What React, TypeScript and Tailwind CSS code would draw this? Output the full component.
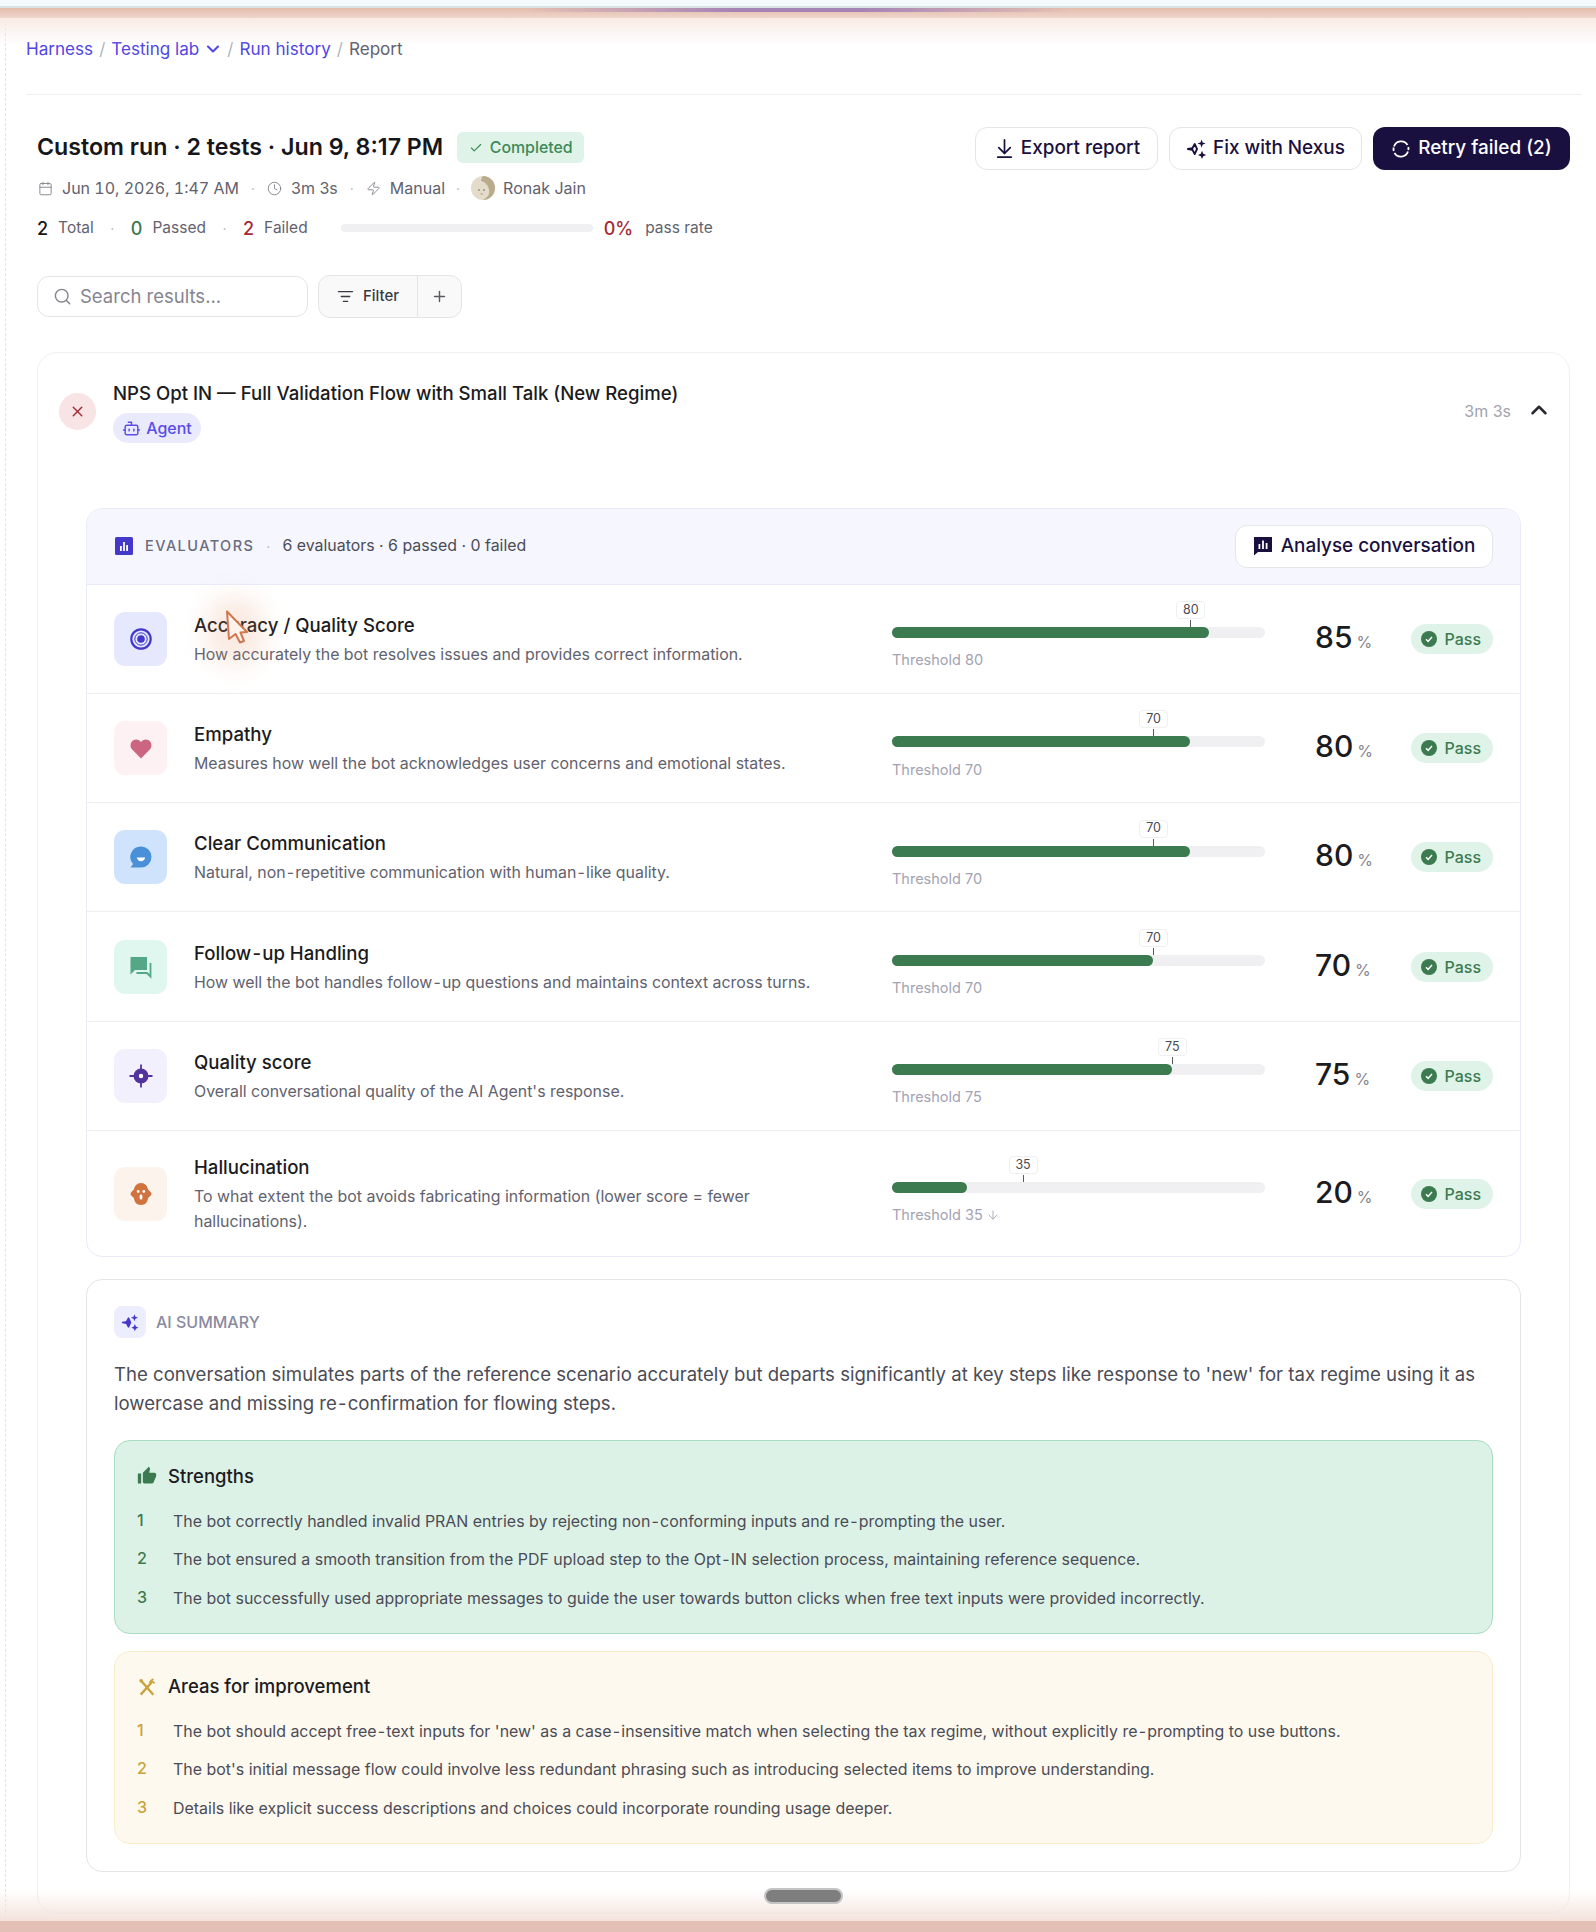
import { ArrowDown, ArrowDownToLine, Bot, Calendar, Check, ChevronDown, ChevronUp, Clock, ListFilter, Plus, Search, X, Zap } from "lucide-react";
import { Fragment } from "react";
import type { ReactNode } from "react";

interface Evaluator {
  name: string;
  desc: string;
  threshold: number;
  score: number;
  iconBg: string;
  icon: ReactNode;
  note?: boolean;
}

const hy = (t: string) =>
  t.split("-").map((part, i) => (
    <Fragment key={i}>
      {i > 0 && <span className="mx-[1.2px]">-</span>}
      {part}
    </Fragment>
  ));

const Sparkles = ({ className, filled }: { className: string; filled?: boolean }) => (
  <svg viewBox="0 0 24 24" className={className} fill="currentColor">
    <path
      d="M9.5 6.5 12 12l-2.5 5.5L7 12.8 2 12l5-.8z"
      fill={filled ? "currentColor" : "none"}
      stroke="currentColor"
      strokeWidth="2"
      strokeLinejoin="round"
    />
    <path d="M17 1.5l1.2 3.3 3.3 1.2-3.3 1.2L17 10.5l-1.2-3.3L12.5 6l3.3-1.2z" />
    <path d="M17.5 14l1.3 3.2 3.2 1.3-3.2 1.3-1.3 3.2-1.3-3.2-3.2-1.3 3.2-1.3z" />
  </svg>
);

const evaluators: Evaluator[] = [
  {
    name: "Accuracy / Quality Score",
    desc: "How accurately the bot resolves issues and provides correct information.",
    threshold: 80,
    score: 85,
    iconBg: "bg-[#e6e8fd]",
    icon: (
      <svg viewBox="0 0 24 24" className="w-[24px] h-[24px]">
        <circle cx="12" cy="12" r="9.7" fill="none" stroke="#4338ca" strokeWidth="2.2" />
        <circle cx="12" cy="12" r="3.8" fill="#4338ca" />
        <circle cx="12" cy="12" r="6.2" fill="none" stroke="#4338ca" strokeWidth="1" />
      </svg>
    ),
  },
  {
    name: "Empathy",
    desc: "Measures how well the bot acknowledges user concerns and emotional states.",
    threshold: 70,
    score: 80,
    iconBg: "bg-[#fdf1f3]",
    icon: (
      <svg viewBox="0 0 24 24" className="w-[24px] h-[24px]">
        <path d="M12 22.5 3.2 13.6C.6 10.8 1 6.2 4.4 4.2 7 2.7 10.2 3.3 12 6c1.8-2.7 5-3.3 7.6-1.8 3.4 2 3.8 6.6 1.2 9.4z" fill="#cc6680" />
      </svg>
    ),
  },
  {
    name: "Clear Communication",
    desc: "Natural, non-repetitive communication with human-like quality.",
    threshold: 70,
    score: 80,
    iconBg: "bg-[#cfe4fc]",
    icon: (
      <svg viewBox="0 0 24 24" className="w-[24px] h-[24px]">
        <path d="M12 1.5a10.5 10.5 0 0 1 0 21H1.5l2.6-3.4A10.5 10.5 0 0 1 12 1.5z" fill="#4a90d9" />
        <path d="M7.8 12.5h8.4c-.4 2.4-2.1 3.8-4.2 3.8s-3.800-1.400-4.200-3.800z" fill="#fff" />
      </svg>
    ),
  },
  {
    name: "Follow-up Handling",
    desc: "How well the bot handles follow-up questions and maintains context across turns.",
    threshold: 70,
    score: 70,
    iconBg: "bg-[#dff7ef]",
    icon: (
      <svg viewBox="0 0 24 24" className="w-[24px] h-[24px]">
        <path d="M1.500 2h16.500v13H6l-4.500 4.500z" fill="#54a886" />
        <path d="M21.500 8v13.500L18 18H7.500" fill="none" stroke="#54a886" strokeWidth="1.800" />
      </svg>
    ),
  },
  {
    name: "Quality score",
    desc: "Overall conversational quality of the AI Agent's response.",
    threshold: 75,
    score: 75,
    iconBg: "bg-[#f3f0fe]",
    icon: (
      <svg viewBox="0 0 24 24" className="w-[24px] h-[24px]">
        <circle cx="12" cy="12" r="7.500" fill="#53349a" />
        <path d="M12 .5v23M.5 12h23" stroke="#53349a" strokeWidth="1.800" />
        <circle cx="12" cy="12" r="2.200" fill="#fff" />
      </svg>
    ),
  },
  {
    name: "Hallucination",
    desc: "To what extent the bot avoids fabricating information (lower score = fewer hallucinations).",
    threshold: 35,
    score: 20,
    iconBg: "bg-[#fcf3ec]",
    note: true,
    icon: (
      <svg viewBox="0 0 24 24" className="w-[24px] h-[24px]">
        <path d="M12 1c4.200 0 6.500 3.200 7 6.500 2.200 1.500 3.500 3.500 3.500 4.500s-1.500 2.500-3.300 3.800c-.5 2.800-1.700 7.200-7.200 7.200s-6.700-4.400-7.200-7.200C3 14.500 1.500 13 1.500 12s1.300-3 3.500-4.500C5.500 4.200 7.800 1 12 1z" fill="#d0733f" />
        <circle cx="9.200" cy="9.500" r="1.400" fill="#fff" />
        <circle cx="14.800" cy="9.500" r="1.400" fill="#fff" />
        <ellipse cx="12" cy="15" rx="1.500" ry="2.800" fill="#fff" />
      </svg>
    ),
  },
];

const strengths = [
  "The bot correctly handled invalid PRAN entries by rejecting non-conforming inputs and re-prompting the user.",
  "The bot ensured a smooth transition from the PDF upload step to the Opt-IN selection process, maintaining reference sequence.",
  "The bot successfully used appropriate messages to guide the user towards button clicks when free text inputs were provided incorrectly.",
];

const improvements = [
  "The bot should accept free-text inputs for 'new' as a case-insensitive match when selecting the tax regime, without explicitly re-prompting to use buttons.",
  "The bot's initial message flow could involve less redundant phrasing such as introducing selected items to improve understanding.",
  "Details like explicit success descriptions and choices could incorporate rounding usage deeper.",
];

const Dot = ({ className }: { className: string }) => <span className={`text-[#b5b5bd] text-[14px] ${className}`}>·</span>;

const EvaluatorRow = ({ e, last }: { e: Evaluator; last: boolean }) => (
  <div className={`flex items-center pl-[27px] pr-[26px] ${last ? "h-[125.500px]" : "h-[109.300px] border-b border-[#eeeef1]"}`}>
    <div className={`w-[53px] h-[54px] shrink-0 rounded-[11px] flex items-center justify-center ${e.iconBg}`}>{e.icon}</div>
    <div className="w-[725px] shrink-0 pl-[27px] pr-[50px] pt-[2px]">
      <div className="text-[18.600px] leading-[24px] font-medium text-[#1b1b20]">{hy(e.name)}</div>
      <div className="mt-[5px] text-[15.900px] leading-[25px] text-[#62626e]">{hy(e.desc)}</div>
    </div>
    <div className="w-[373px] shrink-0 pt-[20px]">
      <div className="relative h-[11px] rounded-full bg-[#f0f0f2]">
        <div className="h-full rounded-full bg-[#3c7a4f]" style={{ width: `${e.score}%` }} />
        <div className="absolute top-[-7px] h-[7px] w-px bg-[#5a5a62]" style={{ left: `${e.threshold}%` }} />
        <div
          className="absolute top-[-26px] w-[29px] h-[18px] -ml-[14px] flex items-center justify-center rounded-[4px] border border-[#efeff2] bg-white text-[12.500px] text-[#4a4a52]"
          style={{ left: `${e.threshold}%` }}
        >
          {e.threshold}
        </div>
      </div>
      <div className="mt-[12px] h-[20px] flex items-center gap-[3px] text-[14.500px] text-[#a3a3b3]">
        Threshold {e.threshold}
        {e.note && <ArrowDown className="w-[14px] h-[14px]" strokeWidth={1.500} />}
      </div>
    </div>
    <div className="ml-[50px] -mt-[4px] w-[95.500px] shrink-0 flex items-baseline">
      <span className="text-[30px] leading-[36px] font-medium text-[#1b1b20]">{e.score}</span>
      <span className="ml-[4px] text-[16px] text-[#85858f]">%</span>
    </div>
    <div className="w-[82px] h-[30px] shrink-0 rounded-full bg-[#dff3e8] flex items-center pl-[10px] gap-[8px]">
      <svg viewBox="0 0 16 16" className="w-[16px] h-[16px]">
        <circle cx="8" cy="8" r="8" fill="#3c7a4f" />
        <path d="M5 8.300l2.100 2.100L11 6" fill="none" stroke="#fff" strokeWidth="1.500" />
      </svg>
      <span className="text-[16px] font-medium text-[#3c7a4f]">Pass</span>
    </div>
  </div>
);

const NoteList = ({ items, numberColor, className }: { items: string[]; numberColor: string; className: string }) => (
  <div className={`flex flex-col gap-[14.500px] ${className}`}>
    {items.map((t, i) => (
      <div key={t} className="flex h-[24px] items-center text-[15.950px] text-[#4c4c56]">
        <span className={`w-[36px] shrink-0 -mt-[3px] text-[16px] font-medium ${numberColor}`}>{i + 1}</span>
        <span>{hy(t)}</span>
      </div>
    ))}
  </div>
);

export default function App() {
  return (
    <div className="relative h-[1932px] overflow-hidden bg-white font-[Inter,sans-serif]">
      <div className="absolute left-[5px] top-[18px] bottom-[10px] border-l border-dashed border-[#e3e3e6]" />

      <div className="ml-[26px] mr-[14px] pt-[37px]">
        <nav className="h-[24px] flex items-center text-[17.100px] text-[#4f46e5]">
          <span>Harness</span>
          <span className="mx-[6px] text-[#b5b5bd]">/</span>
          <span>Testing lab</span>
          <ChevronDown className="ml-[4px] w-[20px] h-[20px]" strokeWidth={2.500} />
          <span className="ml-[4px] mr-[6px] text-[#b5b5bd]">/</span>
          <span>Run history</span>
          <span className="mx-[6px] text-[#b5b5bd]">/</span>
          <span className="text-[#62626e]">Report</span>
        </nav>
        <div className="mt-[33px] border-t border-[#f0f0f2]" />

        <div className="pl-[11px] pr-[12px]">
          <div className="mt-[32px] flex justify-between items-start">
            <div className="pt-[5px]">
              <div className="flex items-center h-[31px]">
                <h1 className="text-[23.200px] font-semibold text-[#16161b]">Custom run · 2 tests · Jun 9, 8:17 PM</h1>
                <span className="ml-[14px] h-[31px] w-[127px] rounded-[6px] bg-[#dff3e8] flex items-center justify-center gap-[7px] text-[15.900px] font-medium text-[#3c8a58]">
                  <Check className="w-[14px] h-[14px]" strokeWidth={2} />
                  Completed
                </span>
              </div>
              <div className="mt-[13px] h-[24px] flex items-center text-[16px] text-[#62626e]">
                <Calendar className="ml-px w-[15px] h-[15px] text-[#85858f]" strokeWidth={1.500} />
                <span className="ml-[9px] tabular-nums">Jun 10, 2026, 1:47 AM</span>
                <Dot className="mx-[12px]" />
                <Clock className="w-[15px] h-[15px] text-[#85858f]" strokeWidth={1.500} />
                <span className="ml-[9px]">3m 3s</span>
                <Dot className="mx-[12px]" />
                <Zap className="w-[15px] h-[15px] text-[#85858f]" strokeWidth={1.500} />
                <span className="ml-[9px]">Manual</span>
                <Dot className="mx-[11px]" />
                <svg viewBox="0 0 24 24" className="w-[24px] h-[24px]">
                  <circle cx="12" cy="12" r="12" fill="#e4dccb" />
                  <path d="M12 0a12 12 0 0 1 0 24c5-3 7-6 6-10-.5-4-3-8-8-9 .5-2 1-4 2-5z" fill="#b9ab8c" />
                  <circle cx="8" cy="14" r=".8" fill="#6a5f50" />
                  <circle cx="13" cy="14" r=".8" fill="#6a5f50" />
                  <path d="M9.500 18h2.500" stroke="#8a7d6a" strokeWidth=".7" />
                </svg>
                <span className="ml-[8px]">Ronak Jain</span>
              </div>
              <div className="mt-[16px] h-[24px] flex items-center text-[15.500px] text-[#62626e]">
                <span className="text-[18px] font-medium text-[#16161b]">2</span>
                <span className="ml-[10px]">Total</span>
                <Dot className="mx-[16.500px]" />
                <span className="text-[18px] font-medium text-[#3c7a4f]">0</span>
                <span className="ml-[10px]">Passed</span>
                <Dot className="mx-[16.500px]" />
                <span className="text-[18px] font-medium text-[#a32a35]">2</span>
                <span className="ml-[10px]">Failed</span>
                <div className="ml-[33px] w-[252px] h-[8px] rounded-full bg-[#f0f0f2]" />
                <span className="ml-[11px] text-[18px] font-medium text-[#a32a35]">0%</span>
                <span className="ml-[12px]">pass rate</span>
              </div>
            </div>

            <div className="flex gap-[11px] text-[18.900px] font-medium">
              <button className="w-[183px] h-[43px] rounded-[12px] border border-[#e5e5e9] bg-white text-[#1a1040] flex items-center justify-center gap-[5px]">
                <ArrowDownToLine className="w-[23px] h-[23px]" strokeWidth={1.800} />
                Export report
              </button>
              <button className="w-[193px] h-[43px] rounded-[12px] border border-[#e5e5e9] bg-white text-[#1a1040] flex items-center justify-center gap-[5px]">
                <Sparkles className="w-[22px] h-[22px]" />
                Fix with Nexus
              </button>
              <button className="w-[197px] h-[43px] rounded-[12px] bg-[#1a1040] text-white flex items-center justify-center gap-[7px]">
                <svg viewBox="0 0 20 20" className="w-[20px] h-[20px]" fill="none" stroke="currentColor" strokeWidth="1.800">
                  <path d="M3 7.500A7.500 7.500 0 0 1 16.500 6" />
                  <path d="M17 12.500A7.500 7.500 0 0 1 3.500 14" />
                  <path d="M2.700 12A7.500 7.500 0 0 1 2.700 8.500" />
                  <path d="M17.300 8A7.500 7.500 0 0 1 17.300 11" />
                </svg>
                Retry failed (2)
              </button>
            </div>
          </div>

          <div className="mt-[35px] h-[43px] flex items-center">
            <div className="w-[271px] h-[41px] rounded-[12px] border border-[#e5e5e9] flex items-center pl-[15px] gap-[8px] text-[18.500px] text-[#85858f]">
              <Search className="w-[19px] h-[19px]" strokeWidth={1.800} />
              Search results...
            </div>
            <div className="ml-[10px] w-[144px] h-[43px] rounded-[12px] border border-[#e5e5e9] bg-[#f9f9fa] flex items-center">
              <div className="w-[99px] h-full border-r border-[#e5e5e9] flex items-center justify-center gap-[9px] text-[15px] font-medium text-[#3a3a44]">
                <ListFilter className="w-[17px] h-[17px]" strokeWidth={1.800} />
                Filter
              </div>
              <Plus className="ml-[13px] w-[17px] h-[17px] text-[#5a5a64]" strokeWidth={2} />
            </div>
          </div>
        </div>

        <div className="ml-[11px] mr-[12px] mt-[34px] h-[1562px] rounded-[20px] border border-[#f0f0f2] pt-[28px]">
          <div className="flex items-center pl-[21px] pr-[17px]">
            <div className="-mt-[2px] w-[37px] h-[37px] rounded-full bg-[#f8e4e4] flex items-center justify-center text-[#a32a35]">
              <X className="w-[17px] h-[17px]" strokeWidth={2} />
            </div>
            <div className="ml-[17px] flex-1">
              <div className="text-[18.600px] leading-[24px] font-medium text-[#1b1b20]">NPS Opt IN — Full Validation Flow with Small Talk (New Regime)</div>
              <span className="mt-[8px] w-[88px] h-[30px] rounded-full bg-[#e9ebfd] flex items-center justify-center gap-[5px] text-[16px] font-medium text-[#5b4de8]">
                <Bot className="w-[19px] h-[19px]" strokeWidth={1.800} />
                Agent
              </span>
            </div>
            <span className="-mt-[3px] text-[16px] text-[#a3a3ad]">3m 3s</span>
            <ChevronUp className="-mt-[4px] ml-[15px] w-[26px] h-[26px] text-[#2a2a32]" strokeWidth={2.300} />
          </div>

          <div className="ml-[48px] mr-[48px] mt-[65px] rounded-[16px] border border-[#e9ebfa] overflow-hidden">
            <div className="h-[75.500px] bg-[#f5f6fe] border-b border-[#e9ebfa] flex items-center pl-[28px] pr-[27px]">
              <svg viewBox="0 0 18 18" className="w-[18px] h-[18px]">
                <rect width="18" height="18" rx="1.500" fill="#4338ca" />
                <path d="M5 9h1.800v5H5zM8.100 5h1.800v9H8.100zM11.200 8h1.800v6h-1.800z" fill="#fff" />
              </svg>
              <span className="ml-[12px] -mt-[1px] text-[14.500px] font-medium tracking-[0.1em] text-[#6b6b7d]">EVALUATORS</span>
              <Dot className="mx-[12px]" />
              <span className="-mt-[1px] text-[15.900px] text-[#4c4c56]">6 evaluators · 6 passed · 0 failed</span>
              <button className="ml-auto w-[258px] h-[43px] rounded-[12px] border border-[#e5e5ea] bg-white text-[18.900px] font-medium text-[#1a1040] flex items-center justify-center gap-[8px]">
                <svg viewBox="0 0 20 20" className="w-[20px] h-[20px]">
                  <path d="M1 1h18v15H5l-4 3.500z" fill="#1a1040" />
                  <path d="M5.500 8h1.800v5H5.500zM9.100 4.500h1.800V13H9.100zM12.700 7h1.800v6h-1.800z" fill="#fff" />
                </svg>
                Analyse conversation
              </button>
            </div>
            {evaluators.map((e, i) => (
              <EvaluatorRow key={e.name} e={e} last={i === evaluators.length - 1} />
            ))}
          </div>

          <div className="ml-[48px] mr-[48px] mt-[22px] rounded-[16px] border border-[#e5e5e8] px-[27px] pt-[26px] pb-[27px]">
            <div className="flex items-center h-[32px]">
              <div className="w-[32px] h-[32px] rounded-[8px] bg-[#eceefe] flex items-center justify-center text-[#4338ca]">
                <Sparkles filled className="w-[19px] h-[19px]" />
              </div>
              <span className="ml-[10px] text-[16px] font-medium text-[#8a8aa0]">AI SUMMARY</span>
            </div>
            <p className="mt-[22px] text-[18.580px] leading-[29px] text-[#4c4c56]">
              The conversation simulates parts of the reference scenario accurately but departs significantly at key steps like response to 'new' for tax regime using it as lowercase and missing {hy("re-confirmation")} for flowing steps.
            </p>

            <div className="mt-[22px] h-[194px] rounded-[16px] border border-[#a9dcc0] bg-[#ddf2e7] px-[22px] pt-[23px]">
              <div className="flex items-center h-[24px] text-[18.500px] font-medium text-[#1b1b20]">
                <svg viewBox="0 0 24 24" className="w-[20px] h-[20px] mr-[11px]" fill="#3c7a4f">
                  <path d="M1 21h4V9H1v12zm22-11c0-1.100-.9-2-2-2h-6.310l.95-4.570.03-.32c0-.41-.17-.79-.44-1.060L14.170 1 7.590 7.590C7.220 7.950 7 8.450 7 9v10c0 1.100.9 2 2 2h9c.83 0 1.540-.5 1.840-1.220l3.020-7.050c.09-.23.14-.47.14-.73v-2z" />
                </svg>
                Strengths
              </div>
              <NoteList items={strengths} numberColor="text-[#3c7a4f]" className="mt-[21px]" />
            </div>

            <div className="mt-[16.500px] h-[193.500px] rounded-[16px] border border-[#f9edcc] bg-[#fdf9ee] px-[22px] pt-[23px]">
              <div className="flex items-center h-[24px] text-[18.500px] font-medium text-[#1b1b20]">
                <svg viewBox="0 0 20 20" className="w-[18px] h-[18px] mx-px mr-[12px]" fill="none" stroke="#c9a23a" strokeWidth="2.600">
                  <path d="M4 3.500 17 18.500" />
                  <path d="M15.500 4.500 3 18.500" />
                  <path d="M12.500 5 17 1M14 2 18.500 6" strokeWidth="1.800" />
                  <circle cx="3.500" cy="3" r="2" fill="#c9a23a" stroke="none" />
                </svg>
                Areas for improvement
              </div>
              <NoteList items={improvements} numberColor="text-[#c9a23a]" className="mt-[20.500px]" />
            </div>
          </div>
        </div>
      </div>

      {/* capture overlays: recording band, pointer, scroll handle */}
      <div className="absolute inset-x-0 top-0 pointer-events-none">
        <div className="h-[6px] bg-[#f4fafc]" />
        <div className="h-[2px] bg-[#d8e2e2]" />
        <div className="relative h-[10px] bg-gradient-to-b from-[#e4bcab] to-[#eed6cc]">
          <div className="absolute inset-x-0 top-0 h-[4px] bg-[linear-gradient(90deg,transparent_33%,#a583b5_46%,#a583b5_54%,transparent_67%)]" />
        </div>
        <div className="h-[27px] bg-gradient-to-b from-[#f8ebe5] to-transparent" />
      </div>
      <div className="absolute inset-x-0 bottom-0 pointer-events-none">
        <div className="h-[31px] bg-gradient-to-b from-transparent to-[#f4e2dc]" />
        <div className="h-[11px] bg-[#e3c0b5]" />
      </div>
      <div className="absolute left-[764px] top-[1888px] w-[79px] h-[16px] rounded-full bg-[#7e7e7e] border-2 border-[#c4c4c4]" />

      <div className="absolute left-[205px] top-[596px] w-[60px] h-[70px] rounded-full bg-[#e8946a]/20 blur-[12px] pointer-events-none" />
      <svg viewBox="0 0 24 34" className="absolute left-[225px] top-[610px] w-[24px] h-[34px]">
        <path d="M2 1.500 22 22l-6.500.5L19 31l-4 1.500-4.500-8.500L4 29z" fill="#fdf3ec" stroke="#d0764e" strokeWidth="2" strokeLinejoin="round" />
      </svg>
    </div>
  );
}
